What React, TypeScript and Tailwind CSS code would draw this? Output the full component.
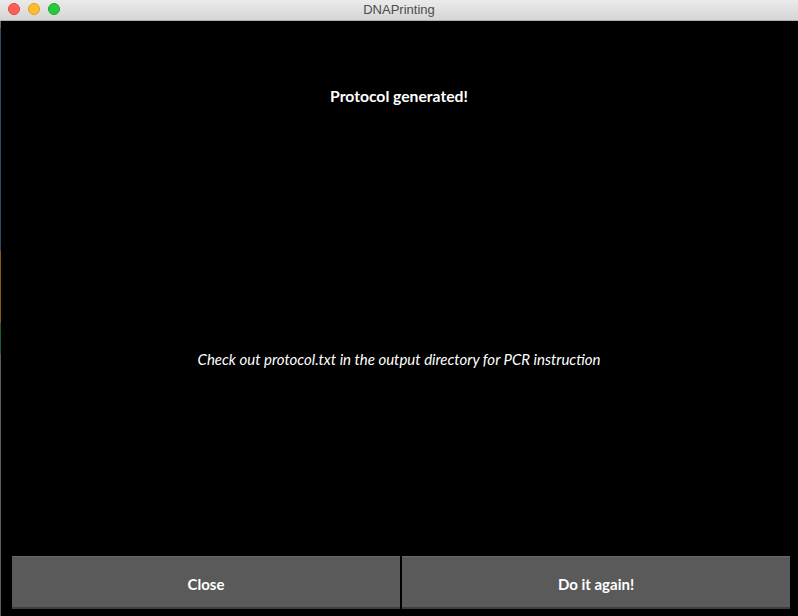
export default function App() {
  return (
    <div className="w-[798px] h-[616px] flex flex-col bg-black overflow-hidden" style={{ fontFamily: "Lato, 'Noto Sans', sans-serif" }}>
      {/* title bar */}
      <div className="relative h-[21px] flex-shrink-0 flex items-center justify-center bg-gradient-to-b from-[#ebebeb] to-[#d5d5d5] border-b border-[#b0b0b0]">
        <div className="absolute left-[8px] top-[3px] flex gap-[8px]">
          <span className="w-[12px] h-[12px] rounded-full bg-[#fe5f57] border border-[#e14640]" />
          <span className="w-[12px] h-[12px] rounded-full bg-[#febc2e] border border-[#dea123]" />
          <span className="w-[12px] h-[12px] rounded-full bg-[#28c840] border border-[#1aab29]" />
        </div>
        <span className="text-[13px] text-[#4d4d4d]" style={{ fontFamily: "'Liberation Sans', sans-serif" }}>DNAPrinting</span>
      </div>

      <div className="flex flex-1 min-h-0">
        {/* window edge strip */}
        <div className="w-px flex flex-col flex-shrink-0">
          <div className="h-[7px] bg-[#6b6b6b]" />
          <div className="h-[223px] bg-[#2c4a6b]" />
          <div className="h-[72px] bg-[#8a5a1c]" />
          <div className="h-[31px] bg-[#1f5a3a]" />
          <div className="flex-1 bg-[#5a5a5a]" />
        </div>

        <div className="flex-1 flex flex-col">
          <div className="h-[66px]" />
          <p className="text-center text-white font-bold text-[15.7px] leading-[19px] pr-px">Protocol generated!</p>
          <div className="h-[244px]" />
          <p className="text-center text-white italic text-[15px] leading-[18px] pr-px">Check out protocol.txt in the output directory for PCR instruction</p>
          <div className="flex-1" />
          <div className="flex gap-[2px] pl-[11px] pr-[8px] pb-[7px]">
            <button className="flex-1 h-[53px] pt-[4px] bg-[#5a5a5a] border-t border-[#6a6a6a] border-b-2 border-b-[#3f3f3f] text-white font-bold text-[15px]">Close</button>
            <button className="flex-1 h-[53px] pt-[4px] bg-[#5a5a5a] border-t border-[#6a6a6a] border-b-2 border-b-[#3f3f3f] text-white font-bold text-[15px]">Do it again!</button>
          </div>
        </div>
      </div>
    </div>
  );
}
